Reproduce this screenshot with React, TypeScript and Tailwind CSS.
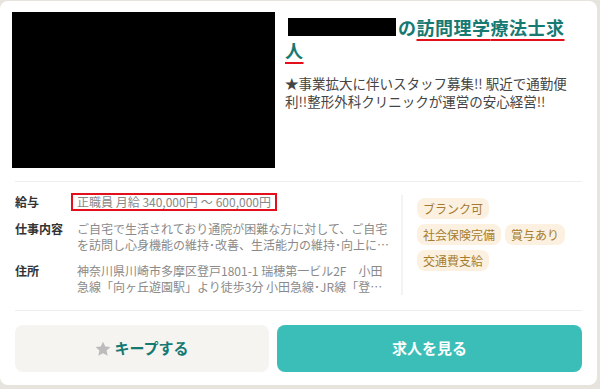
import React from 'react';

const tags = [['ブランク可'], ['社会保険完備', '賞与あり'], ['交通費支給']];

const rows = [
  {
    label: '仕事内容',
    value:
      'ご自宅で生活されており通院が困難な方に対して、ご自宅を訪問し心身機能の維持･改善、生活能力の維持･向上に向けたリハビリテーションを提供します。',
  },
  {
    label: '住所',
    value:
      '神奈川県川崎市多摩区登戸1801-1 瑞穂第一ビル2F　小田急線「向ヶ丘遊園駅」より徒歩3分 小田急線･JR線「登戸駅」より徒歩5分',
  },
];

const App = () => {
  return <div className="w-[600px] h-[389px] bg-[#e6e4dd] pt-px font-['Noto_Sans_CJK_JP',sans-serif]">
      <div className="w-[597px] h-[384px] bg-white rounded-[8px] flex flex-col">
        <div className="flex pt-[11px] pl-[12px] pr-[20px]">
          <div className="w-[263px] h-[156px] bg-black shrink-0" />
          <div className="flex-1 pl-[10px] pt-[4px]">
            <h2 className="text-[18px] leading-[23px] font-bold text-[#167a73] tracking-[0.5px]">
              {/* redacted facility name */}
              <span className="inline-block align-top mt-[2px] w-[108px] h-[18px] bg-black ml-[3px] mr-[2px]" />の
              <span className="underline decoration-[#e3101c] decoration-2 underline-offset-[4px]">訪問理学</span>
              <span className="underline decoration-[#e3101c] decoration-2 underline-offset-[4px]">療法士求人</span>
            </h2>
            <p className="mt-[12px] text-[13.5px] leading-[18px] text-[#444]">
              ★事業拡大に伴いスタッフ募集!! 駅近で通勤便利!!整形外科クリニックが運営の安心経営!!
            </p>
          </div>
        </div>

        <div className="mx-[15px] mt-[13px] h-px bg-[#eeeeee]" />

        <div className="flex mx-[15px] pt-[11px] h-[128px]">
          <div className="w-[386px] pr-[8px] flex flex-col gap-[10px]">
            <div className="flex items-center">
              <div className="w-[62px] text-[12px] font-bold text-[#333]">給与</div>
              <div className="-ml-[6px] border-2 border-[#e3101c] px-[4px] text-[12px] leading-[14px] text-[#888]">
                正職員 月給 340,000円<span className="mx-[3px]">～</span>600,000円
              </div>
            </div>
            {rows.map(r => <div key={r.label} className="flex">
                <div className="w-[62px] shrink-0 text-[12px] leading-[16px] font-bold text-[#333]">{r.label}</div>
                <div className="w-[316px] text-[12px] leading-[16px] text-[#8a8a8a] line-clamp-2">{r.value}</div>
              </div>)}
          </div>
          <div className="mt-[2px] h-[100px] border-l-2 border-[#f3f3f3] pl-[14px] pt-[3px] flex flex-col gap-[5px]">
            {tags.map((line, i) => <div key={i} className="flex gap-[4px]">
                {line.map(t => <span key={t} className="bg-[#fcf1e0] text-[#a57c2f] text-[12px] leading-[15px] px-[6px] py-[3px] rounded-[8px]">
                    {t}
                  </span>)}
              </div>)}
          </div>
        </div>

        <div className="mx-[15px] h-px bg-[#eeeeee]" />

        <div className="flex gap-[8px] mx-[15px] mt-[14px]">
          <button className="w-[254px] h-[47px] rounded-[8px] bg-[#f5f4f1] flex items-center justify-center gap-[3px] text-[15px] font-bold text-[#167a73]">
            <svg width="16" height="16" viewBox="0 0 24 24" fill="#bcbcbc">
              <path d="M12 1l3.4 7.2 7.8.9-5.8 5.3 1.6 7.7L12 18.2l-7 3.9 1.6-7.7-5.8-5.3 7.8-.9z" />
            </svg>
            キープする
          </button>
          <button className="flex-1 h-[47px] rounded-[8px] bg-[#3bbeb7] flex items-center justify-center text-[15px] font-bold text-white">
            求人を見る
          </button>
        </div>
      </div>
    </div>;
};

export default App;
